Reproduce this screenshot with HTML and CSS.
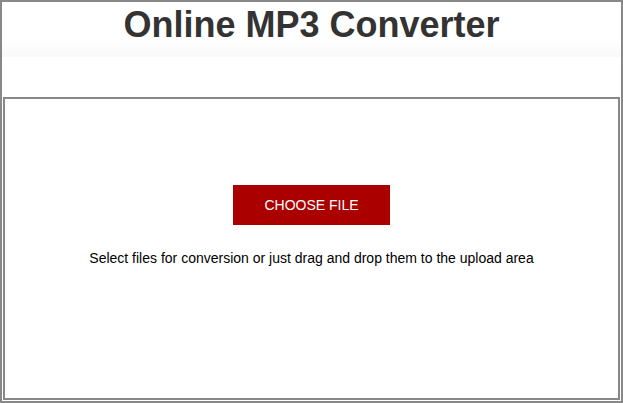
FILE: index.html
```html
<!DOCTYPE html>
<html>
<head>
<meta charset="utf-8">
<link rel="stylesheet" href="styles.css">
</head>
<body>
<div class="frame">
  <header class="header">
    <h1 class="title">Online MP3 Converter</h1>
  </header>
  <div class="spacer"></div>
  <main class="upload">
    <button class="choose">CHOOSE FILE</button>
    <p class="hint">Select files for conversion or just drag and drop them to the upload area</p>
  </main>
</div>
</body>
</html>
```
FILE: styles.css
```css
html, body {
  margin: 0;
  padding: 0;
  background: #fff;
}
.frame {
  box-sizing: border-box;
  width: 623px;
  height: 403px;
  border: 2px solid #888;
  display: flex;
  flex-direction: column;
  font-family: "Liberation Sans", Arial, sans-serif;
}
.header {
  height: 55px;
  flex: none;
  background: linear-gradient(#fff 65%, #f9f9f9);
  display: flex;
  justify-content: center;
}
.title {
  margin: 2px 0 0;
  font-size: 36px;
  line-height: 41px;
  font-weight: bold;
  color: #333;
}
.spacer {
  height: 40px;
  flex: none;
}
.upload {
  flex: 1;
  margin: 0 1px 1px;
  border: 2px solid #888;
  display: flex;
  flex-direction: column;
  align-items: center;
  padding-top: 86px;
}
.choose {
  width: 157px;
  height: 40px;
  border: none;
  background: #a00;
  color: #fff;
  font-family: "Liberation Sans", Arial, sans-serif;
  font-size: 14px;
  padding: 0;
}
.hint {
  margin: 25px 0 0;
  font-size: 14px;
  line-height: 16px;
  color: #000;
}
```
